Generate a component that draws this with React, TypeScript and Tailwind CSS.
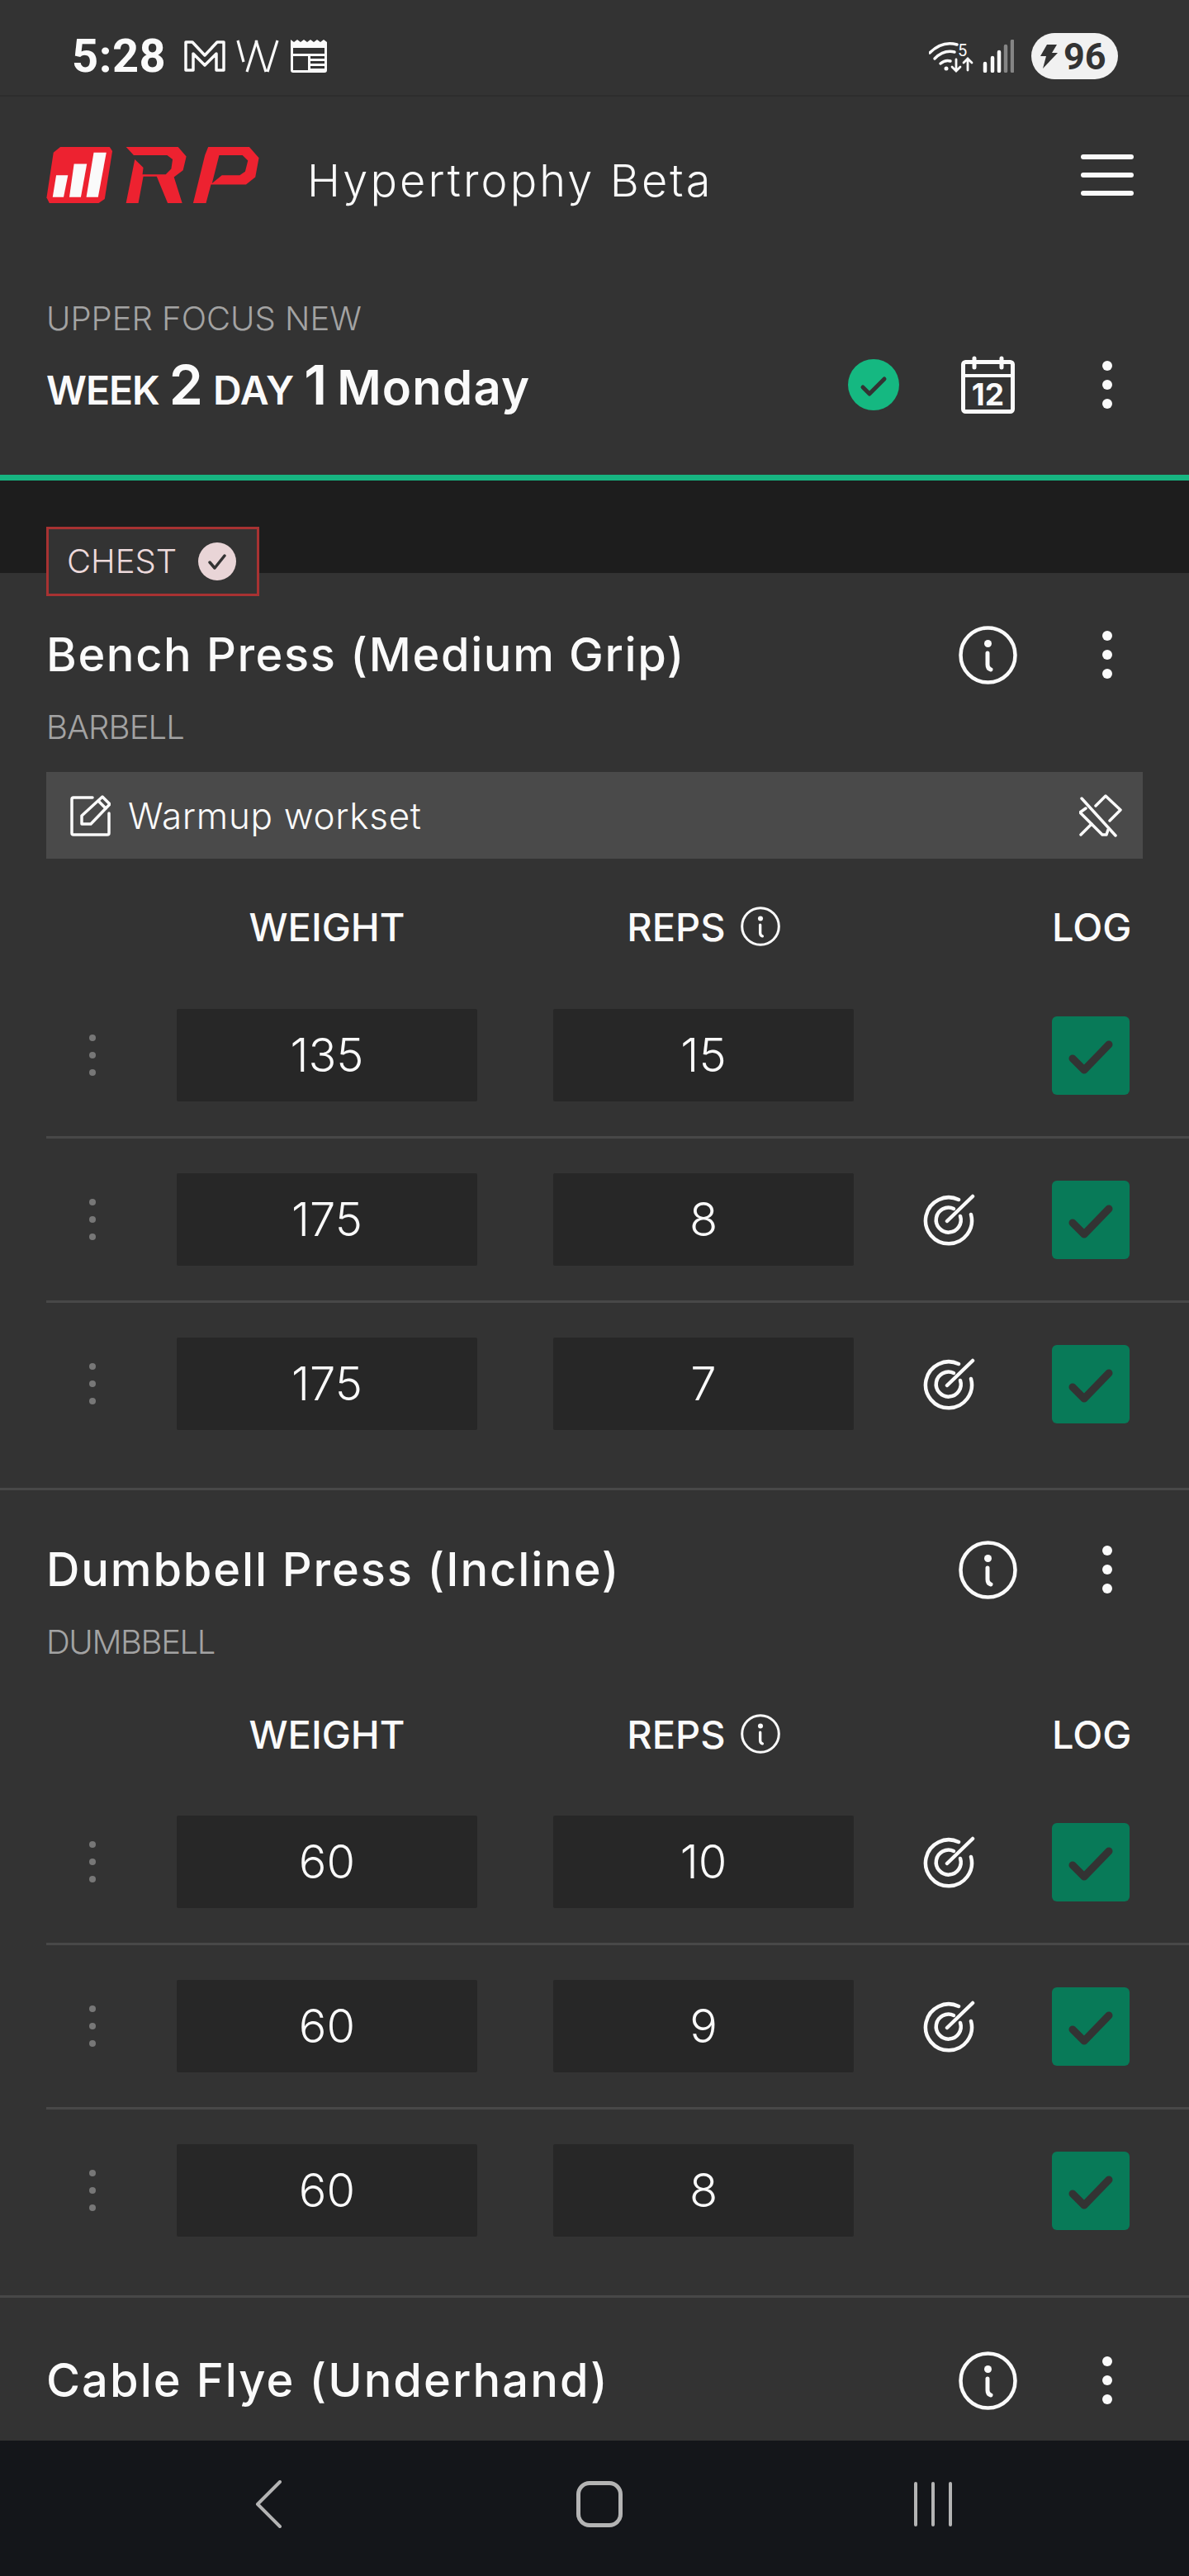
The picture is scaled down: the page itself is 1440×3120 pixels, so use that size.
import React from 'react';

type SetRow = { weight: number; reps: number; target: boolean };

const InfoIcon: React.FC<{ className?: string }> = ({ className }) => (
  <svg viewBox="0 0 71 71" fill="none" stroke="#fafafa" strokeWidth="4.5" strokeLinecap="round" className={className}>
    <circle cx="35.5" cy="35.5" r="33" />
    <circle cx="35.5" cy="21.5" r="4.5" fill="#fafafa" stroke="none" />
    <path d="M35 33 V47 Q35 52 39 53" strokeWidth="5" />
  </svg>
);

const Kebab: React.FC = () => (
  <div className="flex w-[12px] flex-col gap-[11px]">
    <div className="h-[12px] w-[12px] rounded-full bg-[#fafafa]" />
    <div className="h-[12px] w-[12px] rounded-full bg-[#fafafa]" />
    <div className="h-[12px] w-[12px] rounded-full bg-[#fafafa]" />
  </div>
);

const TargetIcon: React.FC = () => (
  <svg viewBox="0 0 63 63" fill="none" stroke="#fafafa" strokeWidth="4.5" strokeLinecap="round" className="h-[63px] w-[63px]">
    <path d="M43 7 A28 28 0 1 0 58 25" />
    <path d="M37 18 A15 15 0 1 0 45 27" />
    <path d="M29 33 L60 3" />
  </svg>
);

const ExerciseHeader: React.FC<{ name: string; nameClass: string; equipment?: string; equipmentClass?: string }> = ({
  name,
  nameClass,
  equipment,
  equipmentClass,
}) => (
  <>
    <div className="flex h-[72px] items-center pl-[56px]">
      <h2 className={`flex-1 text-[56px] leading-none font-medium text-[#fafafa] ${nameClass}`}>{name}</h2>
      <InfoIcon className="h-[71px] w-[71px]" />
      <div className="mr-[93px] ml-[103px]">
        <Kebab />
      </div>
    </div>
    {equipment && (
      <div className={`mt-[28px] h-[48px] pl-[56px] text-[40px] leading-[48px] font-light text-[#a3a3a3] ${equipmentClass}`}>{equipment}</div>
    )}
  </>
);

const ColumnHeader: React.FC = () => (
  <div className="flex h-[72px] items-center text-[47px] leading-none font-medium text-[#fafafa]">
    <div className="ml-[214px] w-[364px] text-center">WEIGHT</div>
    <div className="ml-[92px] flex w-[364px] items-center justify-center gap-[18px]">
      <span>REPS</span>
      <InfoIcon className="h-[48px] w-[48px]" />
    </div>
    <div className="ml-[240px] w-[94px] text-right">LOG</div>
  </div>
);

const Row: React.FC<{ row: SetRow; last?: boolean }> = ({ row, last }) => (
  <div className={`ml-[56px] flex h-[199px] items-center border-b-[3px] ${last ? 'border-transparent' : 'border-[#484848]'}`}>
    <div className="ml-[52px] flex w-[8px] flex-col gap-[13px]">
      <div className="h-[8px] w-[8px] rounded-full bg-[#777777]" />
      <div className="h-[8px] w-[8px] rounded-full bg-[#777777]" />
      <div className="h-[8px] w-[8px] rounded-full bg-[#777777]" />
    </div>
    <div className="ml-[98px] flex h-[112px] w-[364px] items-center justify-center rounded-[2px] bg-[#272727] text-[56px] font-light text-[#fafafa]">
      {row.weight}
    </div>
    <div className="ml-[92px] flex h-[112px] w-[364px] items-center justify-center rounded-[2px] bg-[#272727] text-[56px] font-light text-[#fafafa]">
      {row.reps}
    </div>
    <div className="ml-[84px] h-[63px] w-[63px]">{row.target && <TargetIcon />}</div>
    <div className="ml-[93px] flex h-[95px] w-[94px] items-center justify-center rounded-[6px] bg-[#087a58]">
      <svg viewBox="0 0 94 95" fill="none" stroke="#333333" strokeWidth="9" strokeLinecap="round" strokeLinejoin="round" className="h-[95px] w-[94px]">
        <path d="M25 51 L39 65 L69 34" />
      </svg>
    </div>
  </div>
);

const benchSets: SetRow[] = [
  { weight: 135, reps: 15, target: false },
  { weight: 175, reps: 8, target: true },
  { weight: 175, reps: 7, target: true },
];

const dumbbellSets: SetRow[] = [
  { weight: 60, reps: 10, target: true },
  { weight: 60, reps: 9, target: true },
  { weight: 60, reps: 8, target: false },
];

const StatusBar: React.FC = () => (
  <div className="flex h-[117px] items-center border-b-[2px] border-[#2d2d2d] pt-[21px] pr-[86px] pl-[87px]">
    <span className="text-[56px] leading-none font-bold tracking-[0.5px] text-[#fafafa] [font-family:Roboto,sans-serif]">5:28</span>
    <svg viewBox="0 0 50 38" fill="none" stroke="#fafafa" strokeWidth="3.5" strokeLinejoin="round" className="ml-[22px] h-[38px] w-[50px]">
      <path d="M2 2 H10 L25 18 L40 2 H48 V36 H39 V16 L25 30 L11 16 V36 H2Z" />
    </svg>
    <svg viewBox="0 0 52 40" fill="none" stroke="#fafafa" strokeWidth="3.2" className="ml-[13px] h-[40px] w-[52px]">
      <path d="M2 1 L9 27" />
      <path d="M25 1 L13 39" />
      <path d="M24 1 L36 39" />
      <path d="M50 1 L38 39" />
    </svg>
    <svg viewBox="0 0 44 40" className="ml-[14px] h-[40px] w-[44px]">
      <path fill="#fafafa" d="M0 0 L4 3 L8 0 L12 3 L16 0 L20 3 L24 0 L28 3 L32 0 L36 3 L40 0 L44 3 V37 Q44 40 41 40 H3 Q0 40 0 37 Z" />
      <rect x="3" y="10" width="38" height="7" fill="#333333" />
      <rect x="3" y="20" width="18" height="17" fill="#333333" />
      <rect x="24" y="20" width="17" height="3" fill="#333333" />
      <rect x="24" y="26" width="17" height="3" fill="#333333" />
      <rect x="24" y="32" width="17" height="3" fill="#333333" />
    </svg>
    <div className="flex-1" />
    <svg viewBox="0 0 54 40" fill="none" stroke="#fafafa" strokeWidth="3.5" strokeLinecap="round" className="h-[40px] w-[54px]">
      <path d="M1 16 Q16 1 34 6" />
      <path d="M7 23 Q18 12 31 15" />
      <path d="M14 29 Q20 24 26 26" />
      <circle cx="21" cy="35" r="2.5" fill="#fafafa" stroke="none" />
      <text x="35" y="20" fill="#fafafa" stroke="none" fontSize="20" fontFamily="Roboto, sans-serif">5</text>
      <path d="M33 24 V38 M28 33 L33 38 L38 33" strokeWidth="2.8" />
      <path d="M47 37 V23 M42 28 L47 23 L52 28" strokeWidth="2.8" />
    </svg>
    <svg viewBox="0 0 38 40" fill="none" strokeWidth="4.5" strokeLinecap="round" className="ml-[11px] h-[40px] w-[38px]">
      <path d="M3 29 V38" stroke="#fafafa" />
      <path d="M12 22 V38" stroke="#fafafa" />
      <path d="M20 15 V38" stroke="#fafafa" />
      <path d="M28 8 V38" stroke="#858585" />
      <path d="M36 2 V38" stroke="#858585" />
    </svg>
    <div className="ml-[21px] flex h-[56px] w-[105px] items-center rounded-full bg-[#f1f1f1] pl-[10px]">
      <svg viewBox="0 0 22 29" className="h-[29px] w-[22px]">
        <path fill="#333333" d="M9 0 H21 L15 10 H22 L4 29 L8 14 H1 Z" />
      </svg>
      <span className="ml-[7px] text-[45px] leading-none font-bold text-[#333333] [font-family:Roboto,sans-serif]">96</span>
    </div>
  </div>
);

const AppHeader: React.FC = () => (
  <div className="h-[465px] border-b-[7px] border-[#17b581] pt-[59px]">
    <div className="flex h-[72px] items-center pl-[56px]">
      <svg viewBox="50 55 775 205" className="h-[68px] w-[258px]">
        <path fill="#ed2230" d="M100 55 H280 L290 70 L262 245 L240 260 H60 L50 240 L75 75 Z" />
        <path fill="#fafafa" d="M85 158 H128 L112 238 H72 Z" />
        <path fill="#fafafa" d="M150 117 H197 L175 238 H133 Z" />
        <path fill="#fafafa" d="M222 75 H268 L238 238 H195 Z" />
        <path fill="#ed2230" d="M340 55 H530 L560 90 L548 140 L515 165 L545 260 H492 L452 163 H403 L385 260 H340 L372 100 L403 130 L400 155 H485 L505 135 L510 100 L490 85 H368 Z" />
        <path fill="#ed2230" fillRule="evenodd" d="M640 55 H790 L825 95 L812 165 L778 192 H650 L632 260 H585 L628 85 Z M680 85 H765 L785 105 L775 145 L755 158 H690 L654 188 Z" />
      </svg>
      <span className="ml-[58px] flex-1 pt-[14px] text-[54px] leading-none font-light tracking-[3.1px] text-[#fafafa]">Hypertrophy Beta</span>
      <div className="mr-[67px] flex w-[64px] flex-col gap-[16px]">
        <div className="h-[6px] rounded-full bg-[#fafafa]" />
        <div className="h-[6px] rounded-full bg-[#fafafa]" />
        <div className="h-[6px] rounded-full bg-[#fafafa]" />
      </div>
    </div>
    <div className="mt-[114px] h-[48px] pl-[56px] text-[40px] leading-[48px] font-light text-[#a3a3a3]">UPPER FOCUS NEW</div>
    <div className="mt-[18px] flex h-[76px] items-center pl-[56px]">
      <div className="flex flex-1 items-baseline leading-none font-semibold text-[#fafafa]">
        <span className="text-[48px] tracking-[-1px]">WEEK</span>
        <span className="ml-[12px] text-[66px]">2</span>
        <span className="ml-[12px] text-[48px]">DAY</span>
        <span className="ml-[12px] text-[66px]">1</span>
        <span className="ml-[12px] text-[58px] tracking-[1.2px]">Monday</span>
      </div>
      <svg viewBox="0 0 62 62" className="h-[62px] w-[62px]">
        <circle cx="31" cy="31" r="31" fill="#15b881" />
        <path d="M18 34 L26 42 L44 24" fill="none" stroke="#333333" strokeWidth="5" strokeLinecap="round" strokeLinejoin="round" />
      </svg>
      <svg viewBox="0 0 65 70" fill="none" stroke="#fafafa" strokeWidth="5" className="ml-[75px] h-[70px] w-[65px]">
        <rect x="2.5" y="7.5" width="60" height="60" rx="3" />
        <path d="M2 24 H63" strokeWidth="4" />
        <path d="M16 3 V14 M49 3 V14" strokeLinecap="round" />
        <text x="32.5" y="60" textAnchor="middle" fill="#fafafa" stroke="none" fontSize="37" fontWeight="700" fontFamily="Inter, sans-serif">12</text>
      </svg>
      <div className="mr-[93px] ml-[106px]">
        <Kebab />
      </div>
    </div>
  </div>
);

export default function App() {
  return (
    <div className="flex h-[3120px] w-[1440px] flex-col overflow-hidden bg-[#333333] [font-family:Inter,sans-serif]">
      <StatusBar />
      <AppHeader />

      <main className="min-h-0 flex-1 overflow-hidden">
        {/* muscle group band */}
        <div className="h-[112px] bg-[#1d1d1d] pt-[56px] pl-[56px]">
          <div className="flex h-[84px] w-[258px] items-center border-[3px] border-[#a83232] bg-[#333333] pl-[22px]">
            <span className="text-[40px] leading-none font-light text-[#ecd9db]">CHEST</span>
            <svg viewBox="0 0 46 46" className="ml-[26px] h-[46px] w-[46px]">
              <circle cx="23" cy="23" r="23" fill="#e9d5d7" />
              <path d="M14 24 L20 31 L32 16" fill="none" stroke="#333333" strokeWidth="3.5" strokeLinecap="round" strokeLinejoin="round" />
            </svg>
          </div>
        </div>

        {/* Bench press */}
        <section className="pt-[63px] pb-[25px]">
          <ExerciseHeader name="Bench Press (Medium Grip)" nameClass="tracking-[1.6px]" equipment="BARBELL" equipmentClass="tracking-[-0.9px]" />
          <div className="mx-[56px] mt-[30px] flex h-[105px] items-center bg-[#4a4a4a] pr-[25px] pl-[29px]">
            <svg viewBox="0 0 49 50" fill="none" stroke="#fafafa" strokeWidth="3.5" strokeLinecap="round" strokeLinejoin="round" className="h-[50px] w-[49px]">
              <path d="M27 3 H4 Q2 3 2 5 V46 Q2 48 4 48 H45 Q47 48 47 46 V22" />
              <path d="M39 2 L48 11 L25 35 H14 V25 Z" />
              <path d="M34 7 L43 16" />
            </svg>
            <span className="ml-[21px] flex-1 text-[44px] leading-none font-light tracking-[0.7px] text-[#fafafa]">Warmup workset</span>
            <svg viewBox="0 0 52 52" fill="none" stroke="#fafafa" strokeWidth="3.5" strokeLinecap="round" strokeLinejoin="round" className="h-[52px] w-[52px]">
              <path d="M3 5 L44 50" />
              <path d="M20 14 L32 2 L50 19 L37 32" />
              <path d="M8 17 L1 22 L28 49 H33 L35 43" />
              <path d="M15 36 L2 49" />
            </svg>
          </div>
          <div className="mt-[46px]">
            <ColumnHeader />
          </div>
          <div className="mt-[22px]">
            {benchSets.map((r, i) => (
              <Row key={i} row={r} last={i === benchSets.length - 1} />
            ))}
          </div>
        </section>

        {/* Dumbbell press */}
        <section className="border-t-[3px] border-[#484848] pt-[60px] pb-[26px]">
          <ExerciseHeader name="Dumbbell Press (Incline)" nameClass="tracking-[1.85px]" equipment="DUMBBELL" equipmentClass="tracking-[-1.4px]" />
          <div className="mt-[51px]">
            <ColumnHeader />
          </div>
          <div className="mt-[21px]">
            {dumbbellSets.map((r, i) => (
              <Row key={i} row={r} last={i === dumbbellSets.length - 1} />
            ))}
          </div>
        </section>

        {/* Cable flye */}
        <section className="border-t-[3px] border-[#484848] pt-[64px]">
          <ExerciseHeader name="Cable Flye (Underhand)" nameClass="tracking-[2.05px]" />
        </section>
      </main>

      {/* android nav */}
      <nav className="flex h-[164px] items-center bg-[#14161a] pb-[10px] pl-[309px]">
        <svg viewBox="0 0 32 58" fill="none" stroke="#b4b4b4" strokeWidth="4" strokeLinecap="round" strokeLinejoin="round" className="h-[58px] w-[32px]">
          <path d="M30 2 L3 29 L30 56" />
        </svg>
        <div className="ml-[357px] h-[56px] w-[56px] rounded-[16px] border-[5px] border-[#b4b4b4]" />
        <svg viewBox="0 0 48 54" fill="none" stroke="#b4b4b4" strokeWidth="4" strokeLinecap="round" className="ml-[352px] h-[54px] w-[48px]">
          <path d="M3 2 V52 M24 2 V52 M45 2 V52" />
        </svg>
      </nav>
    </div>
  );
}
